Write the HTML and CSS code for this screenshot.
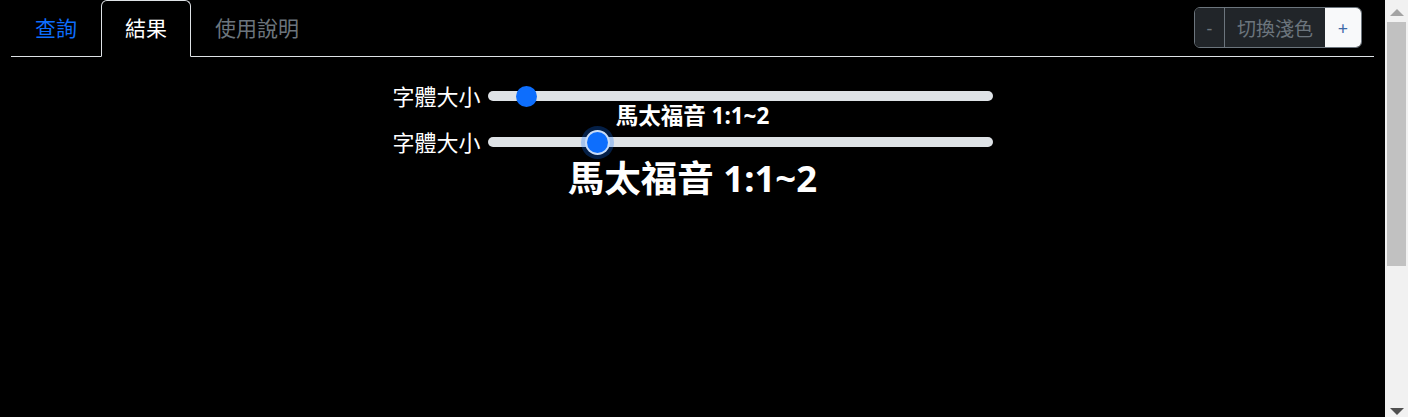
FILE: index.html
```html
<!DOCTYPE html>
<html lang="zh-Hant">
<head>
<meta charset="utf-8">
<title>結果</title>
<link rel="stylesheet" href="styles.css">
</head>
<body>
<div class="frame">
  <div class="page">
    <nav class="tabs">
      <a class="tab tab-link">查詢</a>
      <a class="tab tab-active">結果</a>
      <a class="tab tab-muted">使用說明</a>
      <div class="theme-group">
        <button class="tg-btn tg-dark tg-minus">-</button>
        <button class="tg-btn tg-dark tg-mid">切換淺色</button>
        <button class="tg-btn tg-light tg-plus">+</button>
      </div>
    </nav>
    <main class="result">
      <div class="size-row">
        <label class="size-label">字體大小</label>
        <input class="range" type="range" min="0" max="1000" value="59">
      </div>
      <h5 class="title-small">馬太福音 1:1~2</h5>
      <div class="size-row">
        <label class="size-label">字體大小</label>
        <input class="range range-focus" type="range" min="0" max="1000" value="206">
      </div>
      <h2 class="title-large">馬太福音 1:1~2</h2>
    </main>
  </div>
  <div class="scrollbar" aria-hidden="true">
    <div class="sb-arrow sb-up"></div>
    <div class="sb-track">
      <div class="sb-thumb"></div>
    </div>
    <div class="sb-arrow sb-down"></div>
  </div>
</div>
</body>
</html>
```

FILE: styles.css
```css
html, body {
  margin: 0;
  padding: 0;
  background: #000;
  color: #fff;
  font-family: "Noto Sans", "Noto Sans CJK TC", sans-serif;
  overflow: hidden;
}

.frame {
  display: flex;
  height: 417px;
}

.page {
  flex: 1;
  min-width: 0;
  padding: 0 11px;
}

/* tabs */
.tabs {
  display: flex;
  align-items: flex-start;
  border-bottom: 1px solid #dee2e6;
  height: 56px;
}

.tab {
  display: flex;
  align-items: center;
  height: 56px;
  box-sizing: border-box;
  padding: 0 23px 3px;
  font-size: 21px;
  border: 1px solid transparent;
  border-radius: 6px 6px 0 0;
  cursor: pointer;
}

.tab-link { color: #0d6efd; }
.tab-muted { color: #6c757d; }

.tab-active {
  color: #fff;
  border-color: #dee2e6;
  border-bottom-color: #000;
  background: #000;
  height: 57px;
  padding-bottom: 4px;
}

/* theme toggle */
.theme-group {
  display: flex;
  margin-left: auto;
  margin-right: 12px;
  margin-top: 7px;
  height: 41px;
  border: 1px solid #6c757d;
  border-radius: 6px;
  overflow: hidden;
  box-sizing: border-box;
}

.tg-btn {
  font-family: "Noto Sans", "Noto Sans CJK TC", sans-serif;
  font-size: 18px;
  border: 0;
  margin: 0;
  padding: 0;
  height: 100%;
}

.tg-dark {
  background: #212529;
  color: #6c757d;
}

.tg-minus {
  width: 30px;
  border-right: 1px solid #6c757d;
}

.tg-mid {
  width: 100px;
  font-size: 19px;
}

.tg-light {
  background: #f8f9fa;
}

.tg-plus {
  width: 36px;
  color: #3c6aa8;
}

/* result */
.result {
  display: flex;
  flex-direction: column;
  align-items: center;
  padding-top: 26px;
}

.size-row {
  display: flex;
  align-items: center;
  gap: 7px;
  height: 26px;
}

.size-label {
  font-size: 22px;
  line-height: 26px;
}

.title-small {
  margin: -3px 0 3px;
  font-size: 22.5px;
  font-weight: 700;
  line-height: 20px;
}

.title-large {
  margin: 1px 0 0;
  font-size: 36.5px;
  font-weight: 700;
  line-height: 44px;
}

.range {
  -webkit-appearance: none;
  appearance: none;
  width: 505px;
  height: 24px;
  margin: 0;
  padding: 0;
  background: transparent;
}

.range::-webkit-slider-runnable-track {
  height: 10px;
  border-radius: 5px;
  background: #dee2e6;
}

.range::-webkit-slider-thumb {
  -webkit-appearance: none;
  appearance: none;
  width: 21px;
  height: 21px;
  margin-top: -5.5px;
  border-radius: 50%;
  background: #0d6efd;
  border: 0;
}

.range-focus::-webkit-slider-thumb {
  box-shadow: 0 0 0 2px #c9dcf7, 0 0 0 6px rgba(13, 110, 253, 0.28);
}

/* scrollbar */
.scrollbar {
  width: 23px;
  flex: none;
  background: #f1f1f1;
  display: flex;
  flex-direction: column;
}

.sb-arrow {
  height: 20px;
  flex: none;
  display: flex;
  justify-content: center;
  align-items: center;
}

.sb-up::before,
.sb-down::before {
  content: "";
  width: 0;
  height: 0;
  border-left: 7px solid transparent;
  border-right: 7px solid transparent;
}

.sb-up::before {
  border-bottom: 7px solid #a3a3a3;
  margin-top: 4px;
}

.sb-down::before {
  border-top: 7px solid #505050;
  margin-top: 8px;
}

.sb-track {
  flex: 1;
  padding: 2px 2px 0;
}

.sb-thumb {
  height: 244px;
  background: #c1c1c1;
}
```
